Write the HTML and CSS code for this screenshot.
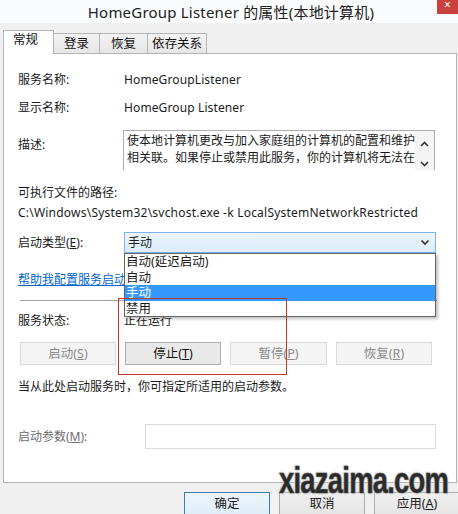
FILE: index.html
```html
<!DOCTYPE html>
<html lang="zh-CN">
<head>
<meta charset="utf-8">
<title>HomeGroup Listener 的属性(本地计算机)</title>
<link rel="stylesheet" href="styles.css">
</head>
<body>
<div class="window">
  <div class="titlebar">
    <span class="title">HomeGroup Listener 的属性(本地计算机)</span>
    <span class="close">×</span>
  </div>

  <div class="tabs">
    <div class="tab active w1">常规</div>
    <div class="tab w2">登录</div>
    <div class="tab w3">恢复</div>
    <div class="tab w4">依存关系</div>
  </div>

  <div class="panel">
    <div class="row r1"><span class="label">服务名称:</span><span class="latin">HomeGroupListener</span></div>
    <div class="row r2"><span class="label">显示名称:</span><span class="latin">HomeGroup Listener</span></div>
    <div class="row r3">
      <span class="label desc-label">描述:</span>
      <div class="desc">
        <div class="desc-text">
          <div>使本地计算机更改与加入家庭组的计算机的配置和维护</div>
          <div>相关联。如果停止或禁用此服务，你的计算机将无法在</div>
        </div>
        <div class="scroll">
          <svg width="9" height="6" viewBox="0 0 9 6"><path d="M1 5 L4.5 1.5 L8 5" fill="none" stroke="#333" stroke-width="1.6"/></svg>
          <svg width="9" height="6" viewBox="0 0 9 6"><path d="M1 1 L4.5 4.5 L8 1" fill="none" stroke="#333" stroke-width="1.6"/></svg>
        </div>
      </div>
    </div>
    <div class="line r4">可执行文件的路径:</div>
    <div class="line path">C:\Windows\System32\svchost.exe -k LocalSystemNetworkRestricted</div>
    <div class="row r6">
      <span class="label">启动类型(<u>E</u>):</span>
      <div class="combo-wrap">
        <div class="combo">
          <span>手动</span>
          <svg width="10" height="7" viewBox="0 0 10 7"><path d="M1.5 1.5 L5 5 L8.5 1.5" fill="none" stroke="#333" stroke-width="1.7"/></svg>
        </div>
        <ul class="dropdown">
          <li>自动(延迟启动)</li>
          <li>自动</li>
          <li class="sel">手动</li>
          <li>禁用</li>
        </ul>
      </div>
    </div>
    <div class="line r7"><a class="link">帮助我配置服务启动选项。</a></div>
    <div class="sep"></div>
    <div class="row r8"><span class="label">服务状态:</span><span>正在运行</span></div>
    <div class="buttons">
      <span class="btn disabled">启动(<u>S</u>)</span>
      <span class="btn">停止(<u>T</u>)</span>
      <span class="btn disabled">暂停(<u>P</u>)</span>
      <span class="btn disabled">恢复(<u>R</u>)</span>
      <div class="highlight"></div>
    </div>
    <div class="line r9">当从此处启动服务时，你可指定所适用的启动参数。</div>
    <div class="row param">
      <span class="label gray">启动参数(<u>M</u>):</span>
      <div class="input"></div>
    </div>
  </div>

  <div class="footer">
    <span class="fbtn default">确定</span>
    <span class="fbtn">取消</span>
    <span class="fbtn">应用(<u>A</u>)</span>
  </div>

  <div class="watermark">xiazaima.com</div>
</div>
</body>
</html>
```

FILE: styles.css
```css
* { box-sizing: border-box; }
html, body { margin: 0; padding: 0; }
body {
  width: 458px;
  height: 514px;
  overflow: hidden;
  background: #f0f0f0;
  font-family: "Noto Sans", "Noto Sans CJK SC", sans-serif;
  font-size: 12px;
  color: #1a1a1a;
}
.window {
  position: relative;
  width: 458px;
  height: 514px;
}
.titlebar {
  position: relative;
  height: 23px;
  background: #fafbfc;
  display: flex;
  justify-content: center;
  align-items: center;
}
.title {
  font-size: 15px;
  color: #222;
  margin-left: 4px;
  letter-spacing: 0.2px;
}
.close {
  position: absolute;
  right: 0;
  top: 0;
  width: 21px;
  height: 14px;
  background: #c8413f;
  color: #fff;
  font-size: 12px;
  line-height: 10px;
  text-align: center;
  overflow: hidden;
}
.tabs {
  display: flex;
  align-items: flex-end;
  height: 31px;
  padding-left: 3px;
  position: relative;
  z-index: 2;
  margin-bottom: -1px;
}
.tab {
  height: 20px;
  margin-bottom: 1px;
  border: 1px solid #b5b5b5;
  border-bottom: none;
  border-left: none;
  background: linear-gradient(#f3f3f3, #e6e6e6);
  text-align: center;
  line-height: 19px;
  font-size: 12.5px;
  color: #111;
}
.tab.active {
  height: 24px;
  margin-bottom: 0;
  background: #fff;
  border-left: 1px solid #b5b5b5;
  line-height: 17px;
  text-align: left;
  padding-left: 9px;
}
.w1 { width: 51px; }
.w2 { width: 46px; }
.w3 { width: 48px; }
.w4 { width: 59px; }

.panel {
  margin-left: 3px;
  width: 454px;
  height: 430px;
  background: #fff;
  border: 1px solid #b3b3b3;
  padding: 16px 19px 0 14px;
  display: flex;
  flex-direction: column;
  position: relative;
}
.row {
  display: flex;
  align-items: center;
  line-height: 20px;
}
.label {
  width: 106px;
  flex: none;
}
.latin { letter-spacing: 0.12px; }
.r1 { height: 20px; }
.r2 { height: 20px; margin-top: 8px; }
.r3 { margin-top: 12px; align-items: flex-start; }
.desc-label { padding-top: 5px; }
.desc {
  width: 312px;
  height: 40px;
  margin-left: -1px;
  border: 1px solid #abadb3;
  border-bottom: none;
  display: flex;
}
.desc-text {
  flex: 1;
  padding: 1px 0 0 3px;
  line-height: 17px;
  white-space: nowrap;
  overflow: hidden;
}
.scroll {
  width: 19px;
  background: #f4f4f4;
  display: flex;
  flex-direction: column;
  align-items: center;
  justify-content: space-between;
  padding: 10px 0 3px;
}
.line { line-height: 20px; height: 20px; white-space: nowrap; }
.path { letter-spacing: 0.22px; }
.r4 { margin-top: 13px; }
.r6 { margin-top: 9px; height: 21px; }
.combo-wrap {
  position: relative;
  width: 312px;
  height: 21px;
}
.combo {
  height: 21px;
  border: 1px solid #7eb4ea;
  background: linear-gradient(#ecf4fc, #dcecfc);
  display: flex;
  justify-content: space-between;
  align-items: center;
  padding: 0 5px 0 3px;
}
.dropdown {
  position: absolute;
  left: 0;
  top: 21px;
  width: 312px;
  margin: 0;
  padding: 0;
  list-style: none;
  background: #fff;
  border: 1px solid #646464;
  box-shadow: 2px 2px 3px rgba(0,0,0,0.25);
  z-index: 5;
}
.dropdown li {
  height: 15.5px;
  line-height: 15px;
  padding-left: 1px;
  font-size: 12.5px;
}
.dropdown li.sel {
  background: #3399ff;
  color: #fff;
}
.r7 { margin-top: 17px; }
.link {
  color: #0066cc;
  text-decoration: underline;
}
.sep {
  margin-top: 10px;
  height: 1px;
  background: #a0a0a0;
  margin-left: 2px;
}
.r8 { margin-top: 10px; height: 20px; }
.buttons {
  position: relative;
  margin-top: 11px;
  margin-left: 2px;
  display: grid;
  grid-template-columns: 96px 96px 97px 96px;
  column-gap: 9px;
  height: 23px;
}
.btn {
  height: 23px;
  border: 1px solid #adadad;
  background: #e9e9e9;
  text-align: center;
  line-height: 21px;
  color: #111;
  font-size: 12.5px;
}
.btn.disabled {
  border-color: #d9d9d9;
  background: #f4f4f4;
  color: #8a8a8a;
}
.highlight {
  position: absolute;
  left: 98px;
  top: -44px;
  width: 169px;
  height: 77px;
  border: 1px solid #c0392b;
  pointer-events: none;
  z-index: 6;
}
.r9 { margin-top: 12px; }
.param { margin-top: 27px; height: 25px; }
.param .label { width: 127px; }
.gray { color: #6d6d6d; }
.input {
  width: 291px;
  height: 25px;
  border: 1px solid #dadada;
  background: #fff;
}
.footer {
  display: flex;
  gap: 9px;
  margin-top: 9px;
  padding-left: 184px;
}
.fbtn {
  flex: none;
  width: 86px;
  height: 23px;
  border: 1px solid #acacac;
  background: linear-gradient(#f0f0f0, #e5e5e5);
  text-align: center;
  line-height: 21px;
  font-size: 12.5px;
}
.fbtn.default {
  border-color: #3c7fb1;
  background: linear-gradient(#eef6fc, #dfedf9);
}
.watermark {
  position: absolute;
  left: 279px;
  top: 460px;
  font-family: "Liberation Sans", Arial, sans-serif;
  font-weight: bold;
  font-size: 37px;
  letter-spacing: -1px;
  color: #2b2b2b;
  transform: scaleX(0.74);
  transform-origin: left top;
  text-shadow: 0 0 2px #d0d0d0, 1px 1px 2px #cfcfcf, -1px -1px 2px #cfcfcf;
  -webkit-text-stroke: 0.5px #444;
  z-index: 10;
}
```
